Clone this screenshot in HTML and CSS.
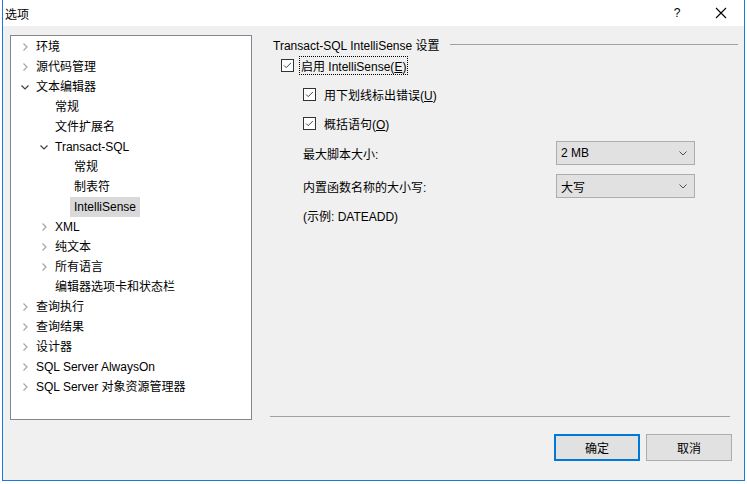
FILE: index.html
```html
<!DOCTYPE html>
<html lang="zh-CN">
<head>
<meta charset="utf-8">
<title>选项</title>
<link rel="stylesheet" href="styles.css">
</head>
<body>
<div class="window">
  <div class="titlebar">
    <span class="title">选项</span>
    <span class="help">?</span>
    <span class="close"><svg width="12" height="12" viewBox="0 0 12 12"><path d="M1 1 L11 11 M11 1 L1 11" stroke="#000" stroke-width="1.1" fill="none"/></svg></span>
  </div>
  <div class="content">
    <div class="tree">
      <div class="row l0"><svg class="chev" viewBox="0 0 8 8"><path d="M2.5 0.5 L6 4 L2.5 7.5" stroke="#a6a6a6" stroke-width="1.2" fill="none"/></svg><span>环境</span></div>
      <div class="row l0"><svg class="chev" viewBox="0 0 8 8"><path d="M2.5 0.5 L6 4 L2.5 7.5" stroke="#a6a6a6" stroke-width="1.2" fill="none"/></svg><span>源代码管理</span></div>
      <div class="row l0"><svg class="chev" viewBox="0 0 8 8"><path d="M0.5 2.5 L4 6 L7.5 2.5" stroke="#404040" stroke-width="1.2" fill="none"/></svg><span>文本编辑器</span></div>
      <div class="row l1"><span class="nochev"></span><span>常规</span></div>
      <div class="row l1"><span class="nochev"></span><span>文件扩展名</span></div>
      <div class="row l1"><svg class="chev" viewBox="0 0 8 8"><path d="M0.5 2.5 L4 6 L7.5 2.5" stroke="#404040" stroke-width="1.2" fill="none"/></svg><span>Transact-SQL</span></div>
      <div class="row l2"><span class="nochev"></span><span>常规</span></div>
      <div class="row l2"><span class="nochev"></span><span>制表符</span></div>
      <div class="row l2"><span class="nochev"></span><span class="sel">IntelliSense</span></div>
      <div class="row l1"><svg class="chev" viewBox="0 0 8 8"><path d="M2.5 0.5 L6 4 L2.5 7.5" stroke="#a6a6a6" stroke-width="1.2" fill="none"/></svg><span>XML</span></div>
      <div class="row l1"><svg class="chev" viewBox="0 0 8 8"><path d="M2.5 0.5 L6 4 L2.5 7.5" stroke="#a6a6a6" stroke-width="1.2" fill="none"/></svg><span>纯文本</span></div>
      <div class="row l1"><svg class="chev" viewBox="0 0 8 8"><path d="M2.5 0.5 L6 4 L2.5 7.5" stroke="#a6a6a6" stroke-width="1.2" fill="none"/></svg><span>所有语言</span></div>
      <div class="row l1"><span class="nochev"></span><span>编辑器选项卡和状态栏</span></div>
      <div class="row l0"><svg class="chev" viewBox="0 0 8 8"><path d="M2.5 0.5 L6 4 L2.5 7.5" stroke="#a6a6a6" stroke-width="1.2" fill="none"/></svg><span>查询执行</span></div>
      <div class="row l0"><svg class="chev" viewBox="0 0 8 8"><path d="M2.5 0.5 L6 4 L2.5 7.5" stroke="#a6a6a6" stroke-width="1.2" fill="none"/></svg><span>查询结果</span></div>
      <div class="row l0"><svg class="chev" viewBox="0 0 8 8"><path d="M2.5 0.5 L6 4 L2.5 7.5" stroke="#a6a6a6" stroke-width="1.2" fill="none"/></svg><span>设计器</span></div>
      <div class="row l0"><svg class="chev" viewBox="0 0 8 8"><path d="M2.5 0.5 L6 4 L2.5 7.5" stroke="#a6a6a6" stroke-width="1.2" fill="none"/></svg><span>SQL Server AlwaysOn</span></div>
      <div class="row l0"><svg class="chev" viewBox="0 0 8 8"><path d="M2.5 0.5 L6 4 L2.5 7.5" stroke="#a6a6a6" stroke-width="1.2" fill="none"/></svg><span>SQL Server 对象资源管理器</span></div>
    </div>
    <div class="panel">
      <div class="settings">
        <div class="group-head"><span>Transact-SQL IntelliSense 设置</span><span class="rule"></span></div>
        <div class="check main"><span class="box"><svg viewBox="0 0 13 13"><path d="M2.5 6.5 L5 9 L10.5 3.5" stroke="#333" stroke-width="1.1" fill="none"/></svg></span><span class="label focus">启用 IntelliSense(<u>E</u>)</span></div>
        <div class="check sub first"><span class="box"><svg viewBox="0 0 13 13"><path d="M2.5 6.5 L5 9 L10.5 3.5" stroke="#333" stroke-width="1.1" fill="none"/></svg></span><span class="label">用下划线标出错误(<u>U</u>)</span></div>
        <div class="check sub"><span class="box"><svg viewBox="0 0 13 13"><path d="M2.5 6.5 L5 9 L10.5 3.5" stroke="#333" stroke-width="1.1" fill="none"/></svg></span><span class="label">概括语句(<u>O</u>)</span></div>
        <div class="field first-field"><span class="flabel">最大脚本大小:</span><div class="combo"><span>2 MB</span><svg viewBox="0 0 8 5"><path d="M0.5 0.5 L4 4 L7.5 0.5" stroke="#505050" stroke-width="1" fill="none"/></svg></div></div>
        <div class="field"><span class="flabel">内置函数名称的大小写:</span><div class="combo"><span>大写</span><svg viewBox="0 0 8 5"><path d="M0.5 0.5 L4 4 L7.5 0.5" stroke="#505050" stroke-width="1" fill="none"/></svg></div></div>
        <div class="example">(示例: DATEADD)</div>
      </div>
      <div class="sep"></div>
      <div class="buttons">
        <button class="btn default">确定</button>
        <button class="btn">取消</button>
      </div>
    </div>
  </div>
</div>
</body>
</html>
```
FILE: styles.css
```css
html, body {
  margin: 0;
  padding: 0;
  background: #ffffff;
}
body {
  font-family: "Liberation Sans", "Noto Sans CJK SC", sans-serif;
  font-size: 12px;
  color: #000;
}
.window {
  margin-left: 2px;
  width: 741px;
  height: 480px;
  border: 1px solid #1a7ad4;
  border-top: none;
  display: flex;
  flex-direction: column;
  background: #f0f0f0;
}
.titlebar {
  height: 26px;
  background: #ffffff;
  display: flex;
  align-items: center;
  flex-shrink: 0;
}
.title {
  padding-left: 2px;
  flex: 1;
  font-size: 12px;
}
.help {
  width: 20px;
  text-align: center;
  margin-right: 28px;
  font-size: 12px;
}
.close {
  width: 12px;
  height: 12px;
  margin-right: 17px;
  display: flex;
}
.content {
  flex: 1;
  display: flex;
  padding: 9px 0 0 7px;
}
.tree {
  width: 240px;
  height: 382px;
  padding-top: 1px;
  border: 1px solid #828790;
  background: #ffffff;
  box-sizing: content-box;
  overflow: hidden;
}
.row {
  height: 20px;
  line-height: 20px;
  display: flex;
  align-items: center;
  white-space: nowrap;
  overflow: hidden;
}
.row.l0 { padding-left: 10px; }
.row.l1 { padding-left: 29px; }
.row.l2 { padding-left: 48px; }
.chev, .nochev {
  width: 8px;
  height: 8px;
  margin-right: 7px;
  flex-shrink: 0;
}
.sel {
  background: #d9d9d9;
  padding: 0 4px;
  margin-left: -4px;
  line-height: 20px;
}
.panel {
  margin-left: 18px;
  width: 462px;
  display: flex;
  flex-direction: column;
}
.settings {
  height: 381px;
  padding-left: 3px;
}
.group-head {
  display: flex;
  align-items: center;
  height: 16px;
  margin-top: 1px;
}
.rule {
  flex: 1;
  height: 1px;
  background: #a0a0a0;
  margin-left: 10px;
  margin-right: -6px;
}
.check {
  display: flex;
  align-items: center;
  height: 18px;
}
.check.main {
  margin-top: 4px;
  padding-left: 8px;
}
.check.sub {
  padding-left: 30px;
  margin-top: 11px;
}
.box {
  width: 11px;
  height: 11px;
  border: 1px solid #333333;
  background: #ffffff;
  display: flex;
  flex-shrink: 0;
}
.box svg {
  width: 11px;
  height: 11px;
}
.label {
  margin-left: 5px;
  padding: 1px 2px;
}
.check.sub .label {
  margin-left: 6px;
}
.label.focus {
  outline: 1px dotted #000;
  outline-offset: -1px;
}
.field {
  display: flex;
  align-items: center;
  height: 24px;
  padding-left: 30px;
  margin-top: 9px;
}
.flabel {
  width: 253px;
}
.combo {
  border: 1px solid #adadad;
  background: #e1e1e1;
  display: flex;
  align-items: center;
  justify-content: space-between;
  padding: 0 7px 0 4px;
  box-sizing: border-box;
  width: 139px;
  height: 24px;
}
.combo svg {
  width: 8px;
  height: 5px;
}
.example {
  padding-left: 30px;
  margin-top: 9px;
}
.sep {
  height: 1px;
  background: #a0a0a0;
  width: 460px;
}
.buttons {
  display: flex;
  justify-content: flex-end;
  gap: 6px;
  margin-top: 17px;
}
.btn {
  width: 86px;
  height: 27px;
  font-family: "Liberation Sans", "Noto Sans CJK SC", sans-serif;
  font-size: 12px;
  background: #e1e1e1;
  border: 1px solid #adadad;
  color: #000;
  padding: 0;
  margin: 0;
}
.btn.default {
  border: 2px solid #0078d7;
}
```
